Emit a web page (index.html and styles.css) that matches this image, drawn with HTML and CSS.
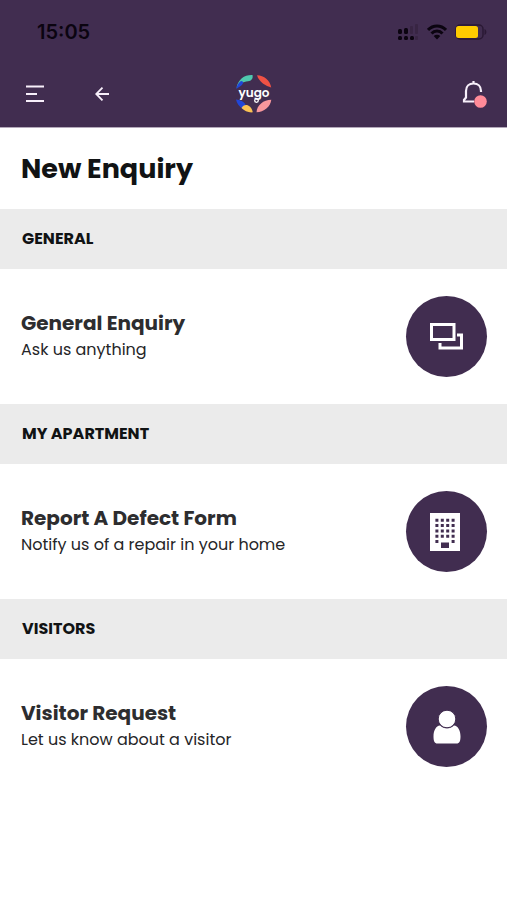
FILE: index.html
```html
<!DOCTYPE html>
<html lang="en">
<head>
<meta charset="utf-8">
<meta name="viewport" content="width=device-width, initial-scale=1">
<title>New Enquiry</title>
<link rel="stylesheet" href="styles.css">
</head>
<body>
<header class="top">
  <div class="status">
    <span class="time">15:05</span>
    <div class="indicators">
      <svg width="22" height="18" viewBox="0 0 22 18" aria-hidden="true">
        <g fill="#0b0410"><rect x="1" y="6" width="4" height="5" rx="1.500"/><rect x="7" y="5" width="4" height="6" rx="1.500"/><rect x="1" y="13" width="4" height="4" rx="1.500"/><rect x="7" y="13" width="4" height="4" rx="1.500"/><rect x="13" y="13" width="4" height="4" rx="1.500"/></g>
        <g fill="#382543"><rect x="13" y="3" width="3" height="8" rx="1"/><rect x="18" y="1" width="3" height="10" rx="1"/><rect x="18" y="13" width="3" height="4" rx="1"/></g>
      </svg>
      <svg width="20" height="16" viewBox="0 0 20 16" aria-hidden="true">
        <g fill="none" stroke="#0b0410" stroke-width="3"><path d="M1 6C6 .7 14 .7 19 6"/><path d="M4.500 9.500c3-3.200 8-3.200 11 0"/></g>
        <path d="M6.700 12c1.900-1.800 4.700-1.800 6.600 0L10 15.500z" fill="#0b0410"/>
      </svg>
      <svg width="32" height="16" viewBox="0 0 32 16" aria-hidden="true">
        <rect x="1" y="1" width="27" height="14" rx="4" fill="none" stroke="#2a1934" stroke-width="1.500"/>
        <rect x="1" y="2" width="22" height="12" rx="2.500" fill="#fc0"/>
        <path d="M29.500 5c2.500 1 2.500 5 0 6z" fill="#2a1934"/>
      </svg>
    </div>
  </div>
  <nav class="bar" aria-label="Main">
    <div class="bar-left">
      <button class="icon-button" type="button" aria-label="Menu">
        <svg width="18" height="18" viewBox="0 0 18 18" fill="none" stroke="#f7effa" stroke-width="2"><path d="M0 1.500h18M0 9h11M0 16h18"/></svg>
      </button>
      <button class="icon-button" type="button" aria-label="Back">
        <svg width="14" height="14" viewBox="0 0 14 14" fill="none" stroke="#f7effa" stroke-width="1.800"><path d="M14 7H1M7.500.600 1.200 7l6.300 6.400"/></svg>
      </button>
    </div>
    <a class="logo" href="#" aria-label="yugo">
      <svg width="38" height="40" viewBox="0 0 38 40">
        <path d="M1.500 14C3 5 10 .500 17.500 1c.8 3.500-1 6-4.500 6.200C8 7.500 4 10 1.500 14z" fill="#4fc8ae"/>
        <path d="M1.300 15C1.800 11.500 3.500 8.500 6 7c1.800 0 2.500 1 2 2.300C7 12 4 13 1.300 15z" fill="#2046d8"/>
        <path d="M22 1.200c7 .3 13 5 14.200 12.300C31 12 24 8 22 1.200z" fill="#f05245"/>
        <path d="M1 25.500c4 .4 8 2 9.500 5L8 35C4 32.500 1.800 29.500 1 25.500z" fill="#2046d8"/>
        <path d="M6.500 34C9 29 16 30 17.800 38.300 13.500 38.800 9.500 37 6.500 34z" fill="#fbc252"/>
        <path d="M21.500 38.300c.3-7 7-12.500 14.800-12.500C35.500 33 29 38 21.500 38.300z" fill="#f8979c"/>
        <text x="19" y="22.500" text-anchor="middle" class="logo-text">yugo</text>
        <circle cx="21.500" cy="26.500" r="1.800" fill="none" stroke="#fff" stroke-width="1.300"/>
      </svg>
    </a>
    <button class="icon-button" type="button" aria-label="Notifications">
      <svg width="25" height="28" viewBox="0 0 25 28">
        <path d="M19 12v-1c0-4.500-3-7.500-7.500-7.500S4 6.500 4 11v6.500L2 20v1.500h10M11.500 3.500V1" fill="none" stroke="#f7effa" stroke-width="2.200"/>
        <circle cx="18.500" cy="21.500" r="6.300" fill="#ff8a98"/>
      </svg>
    </button>
  </nav>
</header>
<main>
  <h1>New Enquiry</h1>
  <section>
    <h2>GENERAL</h2>
    <a class="row" href="#">
      <span class="copy"><span class="name">General Enquiry</span><span class="detail">Ask us anything</span></span>
      <span class="disc">
        <svg width="34" height="28" viewBox="0 0 34 28" fill="none" stroke="#fff" stroke-width="3" aria-hidden="true"><path d="M1.500 1.500h22.500v15h-22.500zM27 12h4.500v13H10v-5"/></svg>
      </span>
    </a>
  </section>
  <section>
    <h2>MY APARTMENT</h2>
    <a class="row" href="#">
      <span class="copy"><span class="name">Report A Defect Form</span><span class="detail">Notify us of a repair in your home</span></span>
      <span class="disc">
        <svg width="33" height="38" viewBox="0 0 33 38" aria-hidden="true">
          <path d="M0 0h30v38H0z" fill="#fff"/>
          <g stroke="#412d50" stroke-width="3" stroke-dasharray="3 2.400"><path d="M5.400 7.200h20M5.400 12.500h20M5.400 18h20M5.400 23.300h20"/></g>
          <path d="M5.400 27h3v3h-3zM21.600 27h3v3h-3zM11 29.500h8v5.500h-8z" fill="#412d50"/>
        </svg>
      </span>
    </a>
  </section>
  <section>
    <h2>VISITORS</h2>
    <a class="row" href="#">
      <span class="copy"><span class="name">Visitor Request</span><span class="detail">Let us know about a visitor</span></span>
      <span class="disc">
        <svg width="28" height="34" viewBox="0 0 28 34" aria-hidden="true">
          <path d="M7 15.500c4 3.800 10 3.800 14 0 4 .5 6.500 5 6.500 11 0 4.500-1 7-4 7h-19c-3 0-4-2.500-4-7 0-6 2.500-10.500 6.500-11z" fill="#fff"/>
          <circle cx="14" cy="9" r="8.800" fill="#fff" stroke="#412d50" stroke-width="1"/>
        </svg>
      </span>
    </a>
  </section>
</main>
</body>
</html>
```
FILE: styles.css
```css
* {
  box-sizing: border-box;
}

body {
  margin: 0;
  background: #fff;
  color: #111314;
  font-family: Poppins, Inter, sans-serif;
}

.top {
  background: #412d50;
  border-bottom: 1px solid #b3a8ba;
}

.status {
  display: flex;
  align-items: center;
  justify-content: space-between;
  height: 64px;
  padding: 0 20px 0 37px;
}

.time {
  color: #0b0410;
  font-family: Inter, sans-serif;
  font-size: 20px;
  font-weight: 600;
}

.indicators {
  display: flex;
  align-items: center;
  gap: 8px;
}

.bar {
  display: grid;
  grid-template-columns: 1fr auto 1fr;
  align-items: center;
  height: 63px;
  padding: 0 20px 4px 20px;
}

.bar-left {
  display: flex;
  align-items: center;
  gap: 51px;
  padding-left: 6px;
}

.icon-button {
  display: flex;
  padding: 0;
  border: 0;
  background: none;
  cursor: pointer;
}

.bar > .icon-button {
  justify-self: end;
}

.logo {
  display: flex;
}

.logo-text {
  fill: #fff;
  font-family: Poppins, Inter, sans-serif;
  font-size: 12px;
  font-weight: 600;
}

h1 {
  margin: 0;
  padding: 20px 21px;
  font-size: 27px;
  font-weight: 700;
  line-height: 41px;
}

h2 {
  margin: 0;
  padding: 18px 22px;
  background: #ebebeb;
  font-size: 16px;
  font-weight: 700;
  line-height: 24px;
}

.row {
  display: flex;
  align-items: center;
  justify-content: space-between;
  gap: 16px;
  padding: 27px 20px 27px 21px;
  color: inherit;
  text-decoration: none;
}

.copy {
  display: flex;
  flex-direction: column;
  padding-bottom: 2px;
}

.name {
  color: #2d2d2f;
  font-size: 20px;
  font-weight: 700;
  line-height: 28px;
}

.detail {
  color: #252527;
  font-size: 16px;
  line-height: 26px;
}

.disc {
  display: flex;
  flex: none;
  align-items: center;
  justify-content: center;
  width: 81px;
  height: 81px;
  border-radius: 50%;
  background: #412d50;
}
```
